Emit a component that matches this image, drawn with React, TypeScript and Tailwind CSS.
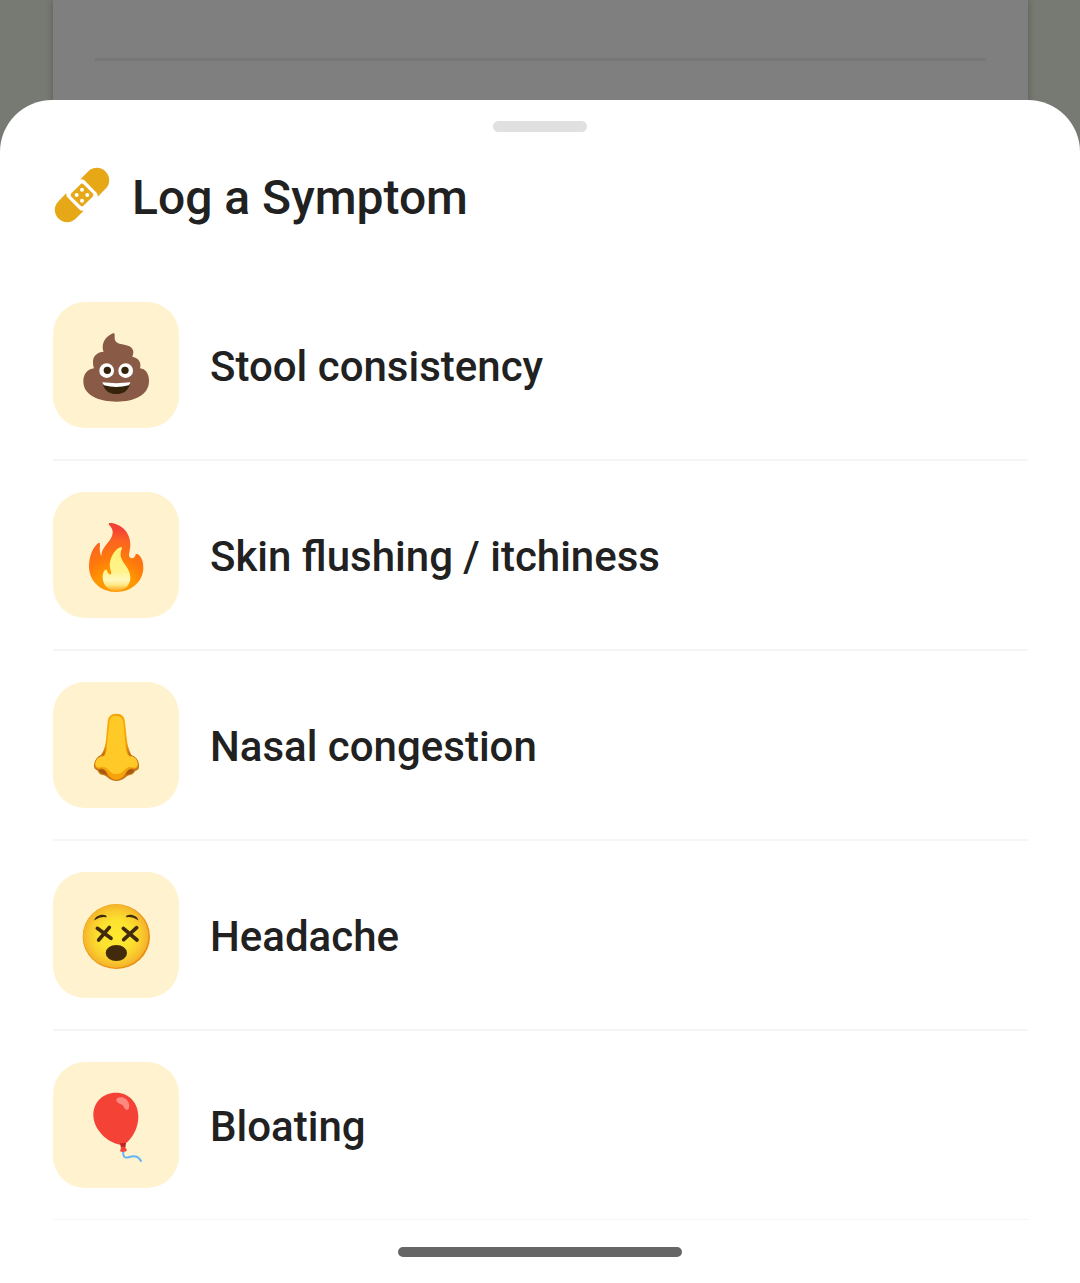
import type { ReactNode } from 'react';

const symptoms: { label: string; icon: ReactNode }[] = [
  { label: 'Stool consistency', icon: <PoopIcon /> },
  { label: 'Skin flushing / itchiness', icon: <FireIcon /> },
  { label: 'Nasal congestion', icon: <NoseIcon /> },
  { label: 'Headache', icon: <DizzyIcon /> },
  { label: 'Bloating', icon: <BalloonIcon /> },
];

export default function App() {
  return (
    <div className="relative flex min-h-screen flex-col bg-[#eff4e5] font-['Roboto',sans-serif] text-[#212121]">
      {/* Page behind the sheet */}
      <div className="absolute inset-0 px-[52px] pl-[53px]" aria-hidden="true">
        <div className="h-28 bg-white px-[42px] pt-[58px] shadow-[0_0_8px_rgba(0,0,0,0.25)]">
          <div className="h-[3px] bg-[#efefef]" />
        </div>
      </div>
      <div className="absolute inset-0 bg-black/50" />

      <section
        role="dialog"
        aria-labelledby="sheet-title"
        className="relative mt-[100px] flex flex-1 flex-col rounded-t-[52px] bg-white"
      >
        <div className="mx-auto mt-[21px] h-[11px] w-[94px] rounded-full bg-[#e0e0e0]" />

        <header className="flex items-center gap-[21px] px-[53px] pt-[30px]">
          <BandageIcon />
          <h1 id="sheet-title" className="pt-[6px] text-[48px] leading-[60px] font-medium">
            Log a Symptom
          </h1>
        </header>

        <ul className="mt-[43px] pr-[52px] pl-[53px]">
          {symptoms.map((s) => (
            <li key={s.label} className="border-b-2 border-[#f5f5f5] last:border-b">
              <button
                type="button"
                className="flex w-full items-center gap-[31px] py-[31px] text-left"
              >
                <span className="flex size-[126px] shrink-0 items-center justify-center rounded-[32px] bg-[#fff2ce]">
                  {s.icon}
                </span>
                <span className="pt-1 text-[42px] leading-[50px] font-medium">{s.label}</span>
              </button>
            </li>
          ))}
        </ul>

        <div className="mx-auto mt-auto mb-[26px] h-[10px] w-[284px] rounded-full bg-[#666666]" />
      </section>
    </div>
  );
}

function BandageIcon() {
  return (
    <svg viewBox="39 45 174 180" className="h-[60px] w-[58px] shrink-0" aria-hidden="true">
      <g transform="translate(126 135) rotate(-45)" fill="#e6a817">
        <path d="M29 -37H63A37 37 0 0 1 63 37H29Q36 33 36 25V-25Q36 -33 29 -37Z" />
        <path d="M-29 -37H-63A37 37 0 0 0 -63 37H-29Q-36 33 -36 25V-25Q-36 -33 -29 -37Z" />
        <rect x="-26" y="-26" width="52" height="52" rx="7" />
      </g>
      <g fill="#fff">
        <circle cx="126" cy="119" r="6" />
        <circle cx="110" cy="135" r="6" />
        <circle cx="142" cy="135" r="6" />
        <circle cx="126" cy="152" r="6" />
      </g>
    </svg>
  );
}

function Emoji({ children }: { children: ReactNode }) {
  return (
    <svg viewBox="0 -3 276 276" className="size-[92px]" aria-hidden="true">
      {children}
    </svg>
  );
}

function PoopIcon() {
  return (
    <Emoji>
      <path
        d="M131 39C113 45 97 63 98 83Q98 90 101 95C83 96 69 107 69 126C69 134 70 139 72 145C53 147 40 162 40 184C40 227 88 245 140 245C193 245 237 225 237 183C237 163 228 147 210 145C214 131 209 114 187 110C195 91 188 78 163 74C145 72 135 68 134 55C134 49 135 40 131 39Z"
        fill="#895a45"
      />
      <circle cx="110" cy="152" r="22" fill="#fff" />
      <circle cx="167" cy="152" r="22" fill="#fff" />
      <circle cx="112" cy="151" r="11" fill="#35220b" />
      <circle cx="165" cy="151" r="11" fill="#35220b" />
      <path d="M98 188Q139 197 180 188C178 210 161 222 139 222C117 222 101 210 98 188Z" fill="#35220b" />
      <path d="M97 187Q139 192 181 187Q181 191 176 196Q139 206 102 196Q98 192 97 187Z" fill="#fff" />
    </Emoji>
  );
}

function FireIcon() {
  return (
    <Emoji>
      <defs>
        <radialGradient id="fire-outer" gradientUnits="userSpaceOnUse" cx="136" cy="246" r="205">
          <stop offset="0.3" stopColor="#ff9800" />
          <stop offset="0.5" stopColor="#ff7a0b" />
          <stop offset="0.75" stopColor="#fb6420" />
          <stop offset="0.92" stopColor="#f44336" />
        </radialGradient>
        <linearGradient id="fire-inner" x1="0" y1="0" x2="0" y2="1">
          <stop offset="0" stopColor="#fff176" />
          <stop offset="0.55" stopColor="#fff38a" />
          <stop offset="0.75" stopColor="#fff8c0" />
          <stop offset="0.86" stopColor="#ffe985" />
          <stop offset="1" stopColor="#ffa31a" />
        </linearGradient>
      </defs>
      <path
        d="M118 39C144 38 182 60 181 105C181 121 174 136 179 142C185 149 196 143 197 133Q197 131 203 132C214 140 220 153 220 172C220 216 184 246 138 246C91 246 57 213 57 169C57 139 69 110 86 98Q91 98 90 105C88 118 90 131 94 138C95 115 111 104 121 88C132 70 130 57 117 44Q115 40 118 39Z"
        fill="url(#fire-outer)"
      />
      <path
        d="M153 111C138 115 121 138 119 164C119 174 124 183 124 190Q122 196 118 193C113 190 113 184 109 178C102 180 98 191 98 201C98 225 115 243 139 243C164 243 181 225 181 203C181 179 164 165 156 149C149 136 152 122 156 116Q156 111 153 111Z"
        fill="url(#fire-inner)"
      />
    </Emoji>
  );
}

function NoseIcon() {
  return (
    <Emoji>
      <defs>
        <linearGradient id="nose-side" x1="0" y1="0" x2="0" y2="1">
          <stop offset="0" stopColor="#ffb300" />
          <stop offset="0.45" stopColor="#f5a000" />
          <stop offset="0.65" stopColor="#b66213" />
          <stop offset="0.85" stopColor="#cf7d16" />
          <stop offset="1" stopColor="#c77718" />
        </linearGradient>
      </defs>
      <path
        d="M139 41C122 41 114 50 113 66L108 120Q105 149 93 165C79 171 72 184 72 199Q72 206 78 209C87 213 84 223 99 225C113 228 116 242 139 243C163 242 166 228 180 225C194 223 191 213 203 210Q208 206 207 197C207 182 199 171 184 165Q173 145 170 114L165 66C164 50 156 41 139 41Z"
        fill="url(#nose-side)"
      />
      <path
        d="M139 42C124 42 116 51 116 66L109 140Q107 160 101 167C88 166 75 180 75 197Q78 207 91 206C113 203 111 239 139 239C168 239 166 203 188 206Q202 207 204 196C204 180 193 168 178 167Q171 156 169 140L162 66C162 51 154 42 139 42Z"
        fill="#f6a20a"
      />
      <path
        d="M139 47C126 46 119 53 118 66L110 142Q109 163 102 169C96 171 91 168 84 174C75 183 74 194 80 200C86 206 99 197 109 204C120 211 121 222 139 222C158 222 160 211 170 204C181 197 190 206 198 202C205 197 204 183 195 174C188 168 183 171 177 169Q169 163 167 142L160 65C157 53 150 47 139 47Z"
        fill="#ffca28"
      />
      <path d="M86 210C98 203 110 211 112 226C104 220 91 225 86 210Z" fill="#a85910" />
      <path d="M193 210C181 203 169 211 167 226C175 220 188 225 193 210Z" fill="#a85910" />
    </Emoji>
  );
}

function DizzyIcon() {
  return (
    <Emoji>
      <defs>
        <radialGradient id="dizzy-face" cx="0.5" cy="0.5" r="0.5">
          <stop offset="0" stopColor="#fde92f" />
          <stop offset="0.5" stopColor="#fce22f" />
          <stop offset="0.78" stopColor="#f9cc2d" />
          <stop offset="1" stopColor="#f4b22b" />
        </radialGradient>
      </defs>
      <ellipse cx="139" cy="140" rx="101" ry="97" fill="#eb8f10" />
      <ellipse cx="137" cy="138" rx="98" ry="95" fill="url(#dizzy-face)" />
      <g fill="none" stroke="#422b0d" strokeLinecap="round">
        <path d="M82 115L123 145M118 112L86 150" strokeWidth="11" />
        <path d="M160 115L201 150M200 113L161 149" strokeWidth="11" />
      </g>
      <g fill="#422b0d">
        <path d="M73 90C75 79 94 70 107 76Q112 80 109 82Q92 78 76 89Q73 92 73 90Z" />
        <path d="M205 90C203 79 184 70 171 76Q166 80 169 82Q186 78 202 89Q205 92 205 90Z" />
        <ellipse cx="139" cy="189" rx="32" ry="24" />
      </g>
    </Emoji>
  );
}

function BalloonIcon() {
  return (
    <Emoji>
      <path
        d="M160 212C158 231 164 236 178 231C193 226 206 230 213 243"
        fill="none"
        stroke="#64b5f6"
        strokeWidth="6"
        strokeLinecap="round"
      />
      <path
        d="M138 38C98 38 70 67 70 105C70 148 112 190 155 195Q160 196 165 192C187 174 205 145 205 110C205 68 177 38 138 38Z"
        fill="#f44336"
      />
      <path d="M150 190Q158 188 168 189L166 203H153Z" fill="#b92525" />
      <path d="M154 201Q160 198 165 201L171 211Q168 217 152 215Q149 213 154 201Z" fill="#f44336" />
      <path
        d="M142 54C153 48 171 53 176 69C179 78 178 86 173 89C166 91 163 84 160 78C156 72 147 72 142 67Q136 59 142 54Z"
        fill="#ff887f"
      />
    </Emoji>
  );
}
